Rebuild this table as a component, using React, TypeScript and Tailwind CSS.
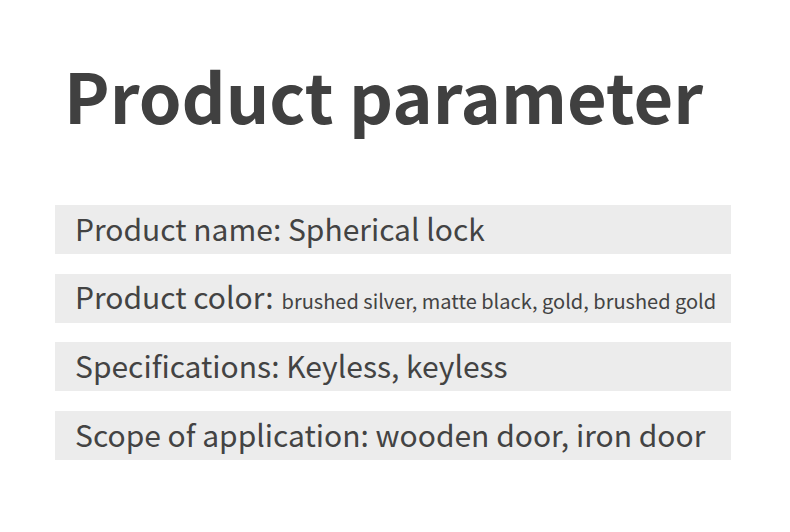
const rows: { label: string; value?: string; small?: boolean }[] = [
  { label: "Product name: Spherical lock" },
  { label: "Product color:", value: "brushed silver, matte black, gold, brushed gold", small: true },
  { label: "Specifications: Keyless, keyless" },
  { label: "Scope of application: wooden door, iron door" },
];

export default function App() {
  return (
    <div
      className="w-[790px] h-[532px] bg-white text-[#434343] overflow-hidden"
      style={{ fontFamily: '"Noto Sans CJK SC", "Noto Sans", sans-serif' }}
    >
      <h1 className="pl-[64px] pt-[61px] h-[205px] text-[68.5px] font-bold leading-none text-[#404040]">
        Product parameter
      </h1>
      <div className="flex flex-col gap-[19.7px] pl-[55px]">
        {rows.map((r) => (
          <div key={r.label} className="w-[676px] h-[49px] bg-[#ececec] flex items-center pl-[20px] pb-[4px]">
            <span className="text-[30px] leading-none whitespace-nowrap">
              {r.label}
              {r.value && <span className="text-[20px] ml-[8px]">{r.value}</span>}
            </span>
          </div>
        ))}
      </div>
    </div>
  );
}
